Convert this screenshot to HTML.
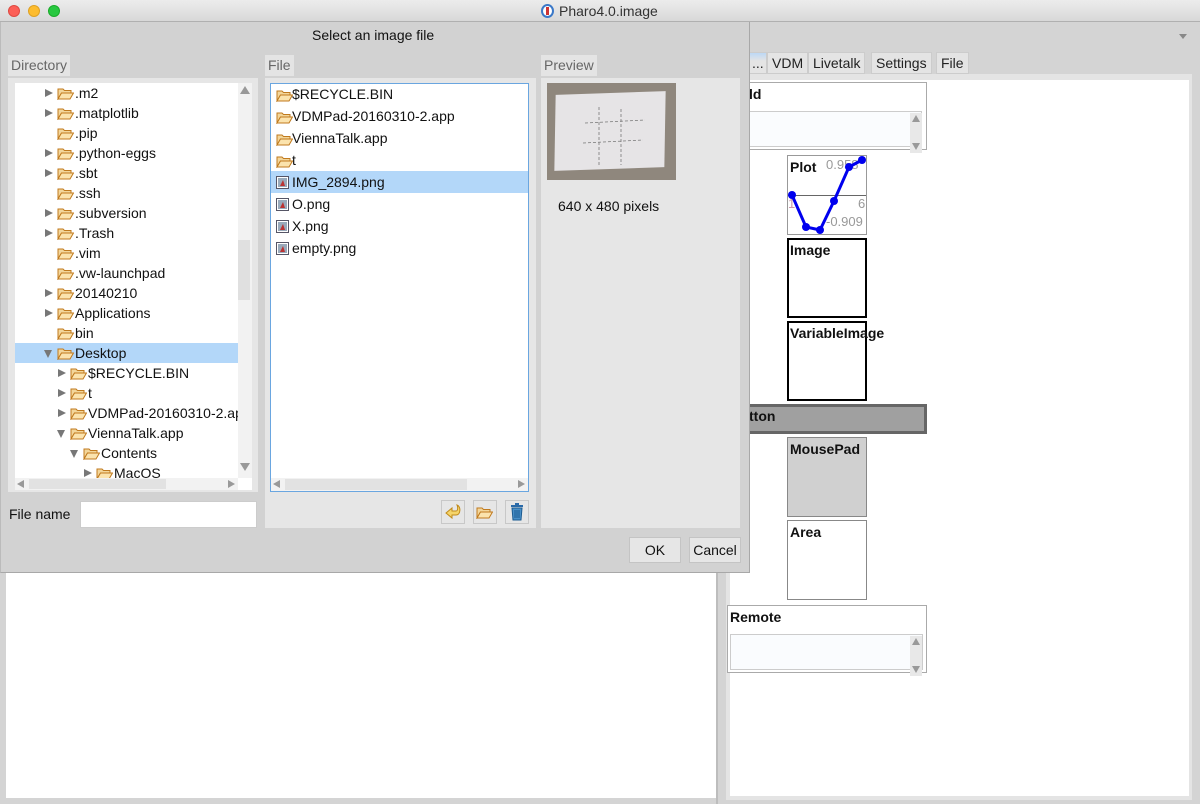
<!DOCTYPE html>
<html><head><meta charset="utf-8"><style>
*{box-sizing:border-box;margin:0;padding:0}
body{width:1200px;height:804px;overflow:hidden;background:#d4d4d4;font-family:"Liberation Sans","DejaVu Sans",sans-serif;font-size:14px;color:#111;position:relative}
.a{position:absolute}
.row{position:absolute;height:20px;line-height:20px;white-space:nowrap;font-size:14px}
.tri{position:absolute;top:6px;width:0;height:0;border-left:8px solid #777;border-top:4px solid transparent;border-bottom:4px solid transparent}
.trid{position:absolute;top:7px;width:0;height:0;border-top:8px solid #777;border-left:4px solid transparent;border-right:4px solid transparent}
.fo{position:absolute;top:4px}
.lbl{position:absolute;background:#e4e4e4;color:#666;font-size:14px;line-height:21px;padding:0 3px}
.b{font-weight:bold;font-size:14px}
.tab{position:absolute;top:52px;height:22px;background:#e4e4e4;border:1px solid #ccc;line-height:20px;padding:0 4px;font-size:14px;color:#222}
</style></head><body>
<svg width="0" height="0" style="position:absolute"><defs>
<symbol id="f" viewBox="0 0 17 13"><path d="M1 2h5l1.5 1.5H14V6H4.5L1 12Z" fill="#f3d69a" stroke="#c07a1e"/><path d="M1 12L4.5 6H16.5L13 12Z" fill="#fbe3ad" stroke="#c07a1e"/></symbol>
<symbol id="im" viewBox="0 0 13 13"><rect x="0.5" y="0.5" width="12" height="12" fill="#fff" stroke="#556"/><rect x="2" y="2" width="9" height="9" fill="#9ab"/><path d="M4 10l3-6 2 6z" fill="#b33"/></symbol>
</defs></svg>

<!-- title bar -->
<div class="a" style="left:0;top:0;width:1200px;height:22px;background:linear-gradient(#ececec,#d8d8d8);border-bottom:1px solid #b0b0b0"></div>
<div class="a" style="left:8px;top:5px;width:12px;height:12px;border-radius:50%;background:#fc5f57;border:1px solid #de4a42"></div>
<div class="a" style="left:28px;top:5px;width:12px;height:12px;border-radius:50%;background:#fdbc2e;border:1px solid #dea123"></div>
<div class="a" style="left:48px;top:5px;width:12px;height:12px;border-radius:50%;background:#28c840;border:1px solid #1aab29"></div>
<div class="a" style="left:541px;top:4px;width:13px;height:14px;border-radius:50%;border:2px solid #3a78c8;background:#fff"></div>
<div class="a" style="left:546px;top:7px;width:3px;height:8px;background:#c33"></div>
<div class="a" style="left:559px;top:3px;font-size:14px;color:#333">Pharo4.0.image</div>

<!-- main window behind -->
<div class="a" style="left:716px;top:22px;width:2px;height:782px;background:#bdbdbd"></div>
<div class="a" style="left:1179px;top:34px;width:0;height:0;border-top:5px solid #888;border-left:4px solid transparent;border-right:4px solid transparent"></div>
<div class="a" style="left:6px;top:572px;width:710px;height:226px;background:#fff"></div>
<div class="a" style="left:726px;top:74px;width:466px;height:726px;background:#e4e4e4"></div>
<div class="a" style="left:730px;top:80px;width:459px;height:716px;background:#fff"></div>
<div class="tab" style="left:749px;width:18px;background:linear-gradient(#bcd8f5,#e4e4e4 40%);padding:0 2px">...</div>
<div class="tab" style="left:767px">VDM</div>
<div class="tab" style="left:808px">Livetalk</div>
<div class="tab" style="left:871px">Settings</div>
<div class="tab" style="left:936px">File</div>

<!-- widgets -->
<div class="a" style="left:727px;top:82px;width:200px;height:68px;border:1px solid #aaa;background:#fff"></div>
<div class="a b" style="left:749px;top:86px">ld</div>
<div class="a" style="left:730px;top:111px;width:192px;height:36px;border:1px solid #ccc;background:#fafcfe"></div>
<div class="a" style="left:910px;top:113px;width:12px;height:40px;background:#e8e8e8"></div>
<div class="a" style="left:912px;top:115px;border-bottom:7px solid #999;border-left:4px solid transparent;border-right:4px solid transparent"></div>
<div class="a" style="left:912px;top:143px;border-top:7px solid #999;border-left:4px solid transparent;border-right:4px solid transparent"></div>

<div class="a" style="left:787px;top:155px;width:80px;height:80px;border:1px solid #999;background:#fff;overflow:hidden">
<div class="a" style="left:0;top:39px;width:80px;height:1px;background:#666"></div>
<div class="a b" style="left:2px;top:3px">Plot</div>
<div class="a" style="left:38px;top:1px;color:#999;font-size:13px">0.958</div>
<div class="a" style="left:0;top:40px;color:#c9a;font-size:13px">1</div>
<div class="a" style="left:70px;top:40px;color:#999;font-size:13px">6</div>
<div class="a" style="left:38px;top:58px;color:#999;font-size:13px">-0.909</div>
<svg class="a" style="left:0;top:0" width="80" height="80"><polyline points="4,39 18,71 32,74 46,45 61,11 74,4" fill="none" stroke="#0000ee" stroke-width="3"/><g fill="#0000ee"><circle cx="4" cy="39" r="4"/><circle cx="18" cy="71" r="4"/><circle cx="32" cy="74" r="4"/><circle cx="46" cy="45" r="4"/><circle cx="61" cy="11" r="4"/><circle cx="74" cy="4" r="4"/></g></svg>
</div>
<div class="a" style="left:787px;top:238px;width:80px;height:80px;border:2px solid #000;background:#fff"></div>
<div class="a b" style="left:790px;top:242px">Image</div>
<div class="a" style="left:787px;top:321px;width:80px;height:80px;border:2px solid #000;background:#fff"></div>
<div class="a b" style="left:790px;top:325px">VariableImage</div>
<div class="a" style="left:727px;top:404px;width:200px;height:30px;border:3px solid #666;background:#a0a0a0"></div>
<div class="a b" style="left:749px;top:408px">tton</div>
<div class="a" style="left:787px;top:437px;width:80px;height:80px;border:1px solid #888;background:#d0d0d0"></div>
<div class="a b" style="left:790px;top:441px">MousePad</div>
<div class="a" style="left:787px;top:520px;width:80px;height:80px;border:1px solid #888;background:#fff"></div>
<div class="a b" style="left:790px;top:524px">Area</div>
<div class="a" style="left:727px;top:605px;width:200px;height:68px;border:1px solid #aaa;background:#fff"></div>
<div class="a b" style="left:730px;top:609px">Remote</div>
<div class="a" style="left:730px;top:634px;width:193px;height:36px;border:1px solid #ccc;background:#fafcfe"></div>
<div class="a" style="left:910px;top:636px;width:12px;height:40px;background:#e8e8e8"></div>
<div class="a" style="left:912px;top:638px;border-bottom:7px solid #999;border-left:4px solid transparent;border-right:4px solid transparent"></div>
<div class="a" style="left:912px;top:666px;border-top:7px solid #999;border-left:4px solid transparent;border-right:4px solid transparent"></div>

<!-- dialog -->
<div class="a" style="left:0;top:22px;width:750px;height:551px;background:#d2d2d2;border-right:1px solid #a8a8a8;border-bottom:1px solid #a8a8a8;border-left:1px solid #bbb"></div>
<div class="a" style="left:312px;top:27px;font-size:14px;color:#111">Select an image file</div>

<div class="lbl" style="left:8px;top:55px">Directory</div>
<div class="a" style="left:8px;top:78px;width:250px;height:414px;background:#e6e6e6"></div>
<div class="a" style="left:15px;top:83px;width:223px;height:395px;background:#fff;overflow:hidden">
<div class="a" style="left:0;top:260px;width:223px;height:20px;background:#b3d7f9"></div>
</div>
<div id="tree" class="a" style="left:15px;top:83px;width:223px;height:395px;overflow:hidden">
<div class="row" style="top:0"><i class="tri" style="left:30px"></i><svg class="fo" style="left:42px" width="17" height="13"><use href="#f"/></svg><span style="position:absolute;left:60px">.m2</span></div>
<div class="row" style="top:20px"><i class="tri" style="left:30px"></i><svg class="fo" style="left:42px" width="17" height="13"><use href="#f"/></svg><span style="position:absolute;left:60px">.matplotlib</span></div>
<div class="row" style="top:40px"><svg class="fo" style="left:42px" width="17" height="13"><use href="#f"/></svg><span style="position:absolute;left:60px">.pip</span></div>
<div class="row" style="top:60px"><i class="tri" style="left:30px"></i><svg class="fo" style="left:42px" width="17" height="13"><use href="#f"/></svg><span style="position:absolute;left:60px">.python-eggs</span></div>
<div class="row" style="top:80px"><i class="tri" style="left:30px"></i><svg class="fo" style="left:42px" width="17" height="13"><use href="#f"/></svg><span style="position:absolute;left:60px">.sbt</span></div>
<div class="row" style="top:100px"><svg class="fo" style="left:42px" width="17" height="13"><use href="#f"/></svg><span style="position:absolute;left:60px">.ssh</span></div>
<div class="row" style="top:120px"><i class="tri" style="left:30px"></i><svg class="fo" style="left:42px" width="17" height="13"><use href="#f"/></svg><span style="position:absolute;left:60px">.subversion</span></div>
<div class="row" style="top:140px"><i class="tri" style="left:30px"></i><svg class="fo" style="left:42px" width="17" height="13"><use href="#f"/></svg><span style="position:absolute;left:60px">.Trash</span></div>
<div class="row" style="top:160px"><svg class="fo" style="left:42px" width="17" height="13"><use href="#f"/></svg><span style="position:absolute;left:60px">.vim</span></div>
<div class="row" style="top:180px"><svg class="fo" style="left:42px" width="17" height="13"><use href="#f"/></svg><span style="position:absolute;left:60px">.vw-launchpad</span></div>
<div class="row" style="top:200px"><i class="tri" style="left:30px"></i><svg class="fo" style="left:42px" width="17" height="13"><use href="#f"/></svg><span style="position:absolute;left:60px">20140210</span></div>
<div class="row" style="top:220px"><i class="tri" style="left:30px"></i><svg class="fo" style="left:42px" width="17" height="13"><use href="#f"/></svg><span style="position:absolute;left:60px">Applications</span></div>
<div class="row" style="top:240px"><svg class="fo" style="left:42px" width="17" height="13"><use href="#f"/></svg><span style="position:absolute;left:60px">bin</span></div>
<div class="row" style="top:260px"><i class="trid" style="left:29px"></i><svg class="fo" style="left:42px" width="17" height="13"><use href="#f"/></svg><span style="position:absolute;left:60px">Desktop</span></div>
<div class="row" style="top:280px"><i class="tri" style="left:43px"></i><svg class="fo" style="left:55px" width="17" height="13"><use href="#f"/></svg><span style="position:absolute;left:73px">$RECYCLE.BIN</span></div>
<div class="row" style="top:300px"><i class="tri" style="left:43px"></i><svg class="fo" style="left:55px" width="17" height="13"><use href="#f"/></svg><span style="position:absolute;left:73px">t</span></div>
<div class="row" style="top:320px"><i class="tri" style="left:43px"></i><svg class="fo" style="left:55px" width="17" height="13"><use href="#f"/></svg><span style="position:absolute;left:73px">VDMPad-20160310-2.app</span></div>
<div class="row" style="top:340px"><i class="trid" style="left:42px"></i><svg class="fo" style="left:55px" width="17" height="13"><use href="#f"/></svg><span style="position:absolute;left:73px">ViennaTalk.app</span></div>
<div class="row" style="top:360px"><i class="trid" style="left:55px"></i><svg class="fo" style="left:68px" width="17" height="13"><use href="#f"/></svg><span style="position:absolute;left:86px">Contents</span></div>
<div class="row" style="top:380px"><i class="tri" style="left:69px"></i><svg class="fo" style="left:81px" width="17" height="13"><use href="#f"/></svg><span style="position:absolute;left:99px">MacOS</span></div>
</div>
<div class="a" style="left:238px;top:83px;width:14px;height:395px;background:#f2f2f2"></div>
<div class="a" style="left:238px;top:240px;width:12px;height:60px;background:#e0e0e0"></div>
<div class="a" style="left:240px;top:86px;border-bottom:8px solid #999;border-left:5px solid transparent;border-right:5px solid transparent"></div>
<div class="a" style="left:240px;top:463px;border-top:8px solid #999;border-left:5px solid transparent;border-right:5px solid transparent"></div>
<div class="a" style="left:15px;top:478px;width:223px;height:12px;background:#f2f2f2"></div>
<div class="a" style="left:29px;top:479px;width:137px;height:10px;background:#e2e2e2"></div>
<div class="a" style="left:17px;top:480px;border-right:7px solid #999;border-top:4px solid transparent;border-bottom:4px solid transparent"></div>
<div class="a" style="left:228px;top:480px;border-left:7px solid #999;border-top:4px solid transparent;border-bottom:4px solid transparent"></div>
<div class="a" style="left:238px;top:478px;width:14px;height:12px;background:#fff"></div>

<div class="a" style="left:9px;top:506px;font-size:14px">File name</div>
<div class="a" style="left:80px;top:501px;width:177px;height:27px;background:#fff;border:1px solid #ccc"></div>

<div class="lbl" style="left:265px;top:55px">File</div>
<div class="a" style="left:265px;top:78px;width:271px;height:450px;background:#e6e6e6"></div>
<div class="a" style="left:270px;top:83px;width:259px;height:409px;background:#fff;border:1px solid #6aa6e0"></div>
<div class="a" style="left:271px;top:171px;width:257px;height:22px;background:#b3d7f9"></div>
<div class="a" style="left:271px;top:84px;width:257px;height:200px">
<div class="row" style="top:0;height:22px;line-height:20px"><svg class="fo" style="left:5px;top:5px" width="17" height="13"><use href="#f"/></svg><span style="position:absolute;left:21px">$RECYCLE.BIN</span></div>
<div class="row" style="top:22px;line-height:20px"><svg class="fo" style="left:5px;top:5px" width="17" height="13"><use href="#f"/></svg><span style="position:absolute;left:21px">VDMPad-20160310-2.app</span></div>
<div class="row" style="top:44px;line-height:20px"><svg class="fo" style="left:5px;top:5px" width="17" height="13"><use href="#f"/></svg><span style="position:absolute;left:21px">ViennaTalk.app</span></div>
<div class="row" style="top:66px;line-height:20px"><svg class="fo" style="left:5px;top:5px" width="17" height="13"><use href="#f"/></svg><span style="position:absolute;left:21px">t</span></div>
<div class="row" style="top:88px;line-height:20px"><svg class="fo" style="left:5px;top:4px" width="13" height="13"><use href="#im"/></svg><span style="position:absolute;left:21px">IMG_2894.png</span></div>
<div class="row" style="top:110px;line-height:20px"><svg class="fo" style="left:5px;top:4px" width="13" height="13"><use href="#im"/></svg><span style="position:absolute;left:21px">O.png</span></div>
<div class="row" style="top:132px;line-height:20px"><svg class="fo" style="left:5px;top:4px" width="13" height="13"><use href="#im"/></svg><span style="position:absolute;left:21px">X.png</span></div>
<div class="row" style="top:154px;line-height:20px"><svg class="fo" style="left:5px;top:4px" width="13" height="13"><use href="#im"/></svg><span style="position:absolute;left:21px">empty.png</span></div>
</div>
<div class="a" style="left:271px;top:478px;width:257px;height:13px;background:#f2f2f2"></div>
<div class="a" style="left:285px;top:479px;width:182px;height:11px;background:#e2e2e2"></div>
<div class="a" style="left:273px;top:480px;border-right:7px solid #999;border-top:4px solid transparent;border-bottom:4px solid transparent"></div>
<div class="a" style="left:518px;top:480px;border-left:7px solid #999;border-top:4px solid transparent;border-bottom:4px solid transparent"></div>

<div class="a" style="left:441px;top:500px;width:24px;height:24px;border:1px solid #c8c8c8;background:#e6e6e6"></div>
<svg class="a" style="left:444px;top:503px" width="18" height="18"><path d="M2 10l6-5v3h4c2 0 2-4 1-6 4 1 4 10-1 10H8v3z" fill="#f5d46a" stroke="#c08a1a"/></svg>
<div class="a" style="left:473px;top:500px;width:24px;height:24px;border:1px solid #c8c8c8;background:#e6e6e6"></div>
<svg class="a" style="left:476px;top:506px" width="17" height="13"><use href="#f"/></svg>
<div class="a" style="left:505px;top:500px;width:24px;height:24px;border:1px solid #c8c8c8;background:#e6e6e6"></div>
<svg class="a" style="left:510px;top:503px" width="14" height="18"><rect x="1" y="2" width="12" height="2" fill="#2a6aa8"/><rect x="5" y="0" width="4" height="2" fill="#2a6aa8"/><path d="M2 5h10l-1 12H3z" fill="#4a90c8" stroke="#1a5a90"/><path d="M5 7v8M7 7v8M9 7v8" stroke="#1a5a90"/></svg>

<div class="lbl" style="left:541px;top:55px">Preview</div>
<div class="a" style="left:541px;top:78px;width:199px;height:450px;background:#e6e6e6"></div>
<div class="a" style="left:547px;top:83px;width:129px;height:97px;background:#8f877d"></div>
<div class="a" style="left:555px;top:93px;width:110px;height:76px;background:#e6e4e6;transform:skew(-1deg,-2deg)"></div>
<svg class="a" style="left:547px;top:83px" width="129" height="97"><path d="M38 40l60-3M36 60l60-3M52 24v58M74 26v56" stroke="#777" stroke-width="0.8" stroke-dasharray="3,2" fill="none"/></svg>
<div class="a" style="left:558px;top:198px;font-size:14px">640 x 480 pixels</div>

<div class="a" style="left:629px;top:537px;width:52px;height:26px;border:1px solid #c4c4c4;background:#e6e6e6;text-align:center;line-height:24px">OK</div>
<div class="a" style="left:689px;top:537px;width:52px;height:26px;border:1px solid #c4c4c4;background:#e6e6e6;text-align:center;line-height:24px">Cancel</div>
</body></html>
